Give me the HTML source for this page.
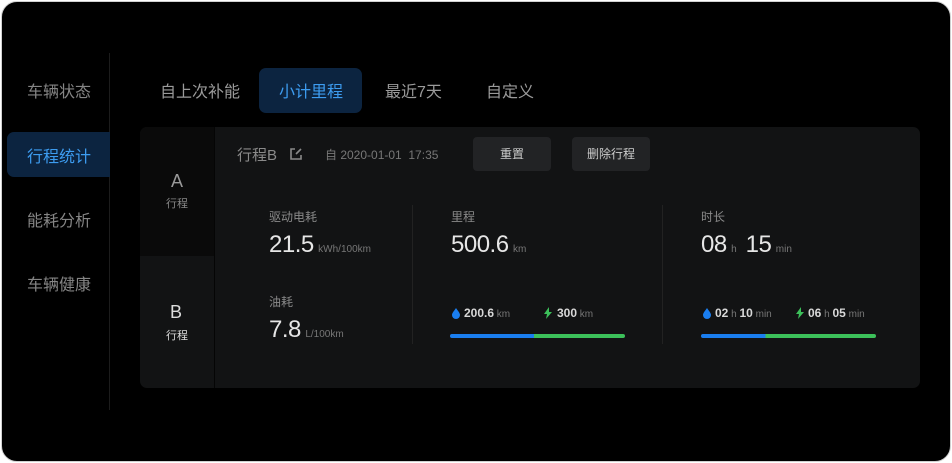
<html><head><style>
*{margin:0;padding:0;box-sizing:border-box}
body{width:952px;height:463px;background:#fff;font-family:"Liberation Sans","Noto Sans CJK SC",sans-serif;position:relative;overflow:hidden}
.card{position:absolute;left:1px;top:1px;width:950px;height:461px;background:#000;border:1px solid #d0d0d0;border-radius:16px}
.a{position:absolute;white-space:nowrap}
.nav{font-size:16px;color:#858585}
.tab{font-size:16px;color:#9a9a9a}
.g{color:#8a8a8a}
.big{font-size:24px;color:#e6e6e6;letter-spacing:-0.5px}
.u{font-size:10px;color:#777}
.s{font-size:12px;color:#d8d8d8;font-weight:bold}
</style></head><body>
<div class="card"></div>
<div class="a" style="left:109px;top:53px;width:1px;height:357px;background:#1c1c1c"></div>
<div class="a" style="left:7px;top:132px;width:103px;height:45px;background:#0c2440;border-radius:7px 0 0 7px"></div>
<div class="a nav" style="left:27px;top:78px">车辆状态</div>
<div class="a nav" style="left:27px;top:143px;color:#3d9cf0">行程统计</div>
<div class="a nav" style="left:27px;top:207px">能耗分析</div>
<div class="a nav" style="left:27px;top:271px">车辆健康</div>

<div class="a" style="left:259px;top:68px;width:103px;height:45px;background:#0c2440;border-radius:7px"></div>
<div class="a tab" style="left:160px;top:78px">自上次补能</div>
<div class="a tab" style="left:279px;top:78px;color:#3d9cf0">小计里程</div>
<div class="a tab" style="left:385px;top:78px">最近7天</div>
<div class="a tab" style="left:486px;top:78px">自定义</div>

<div class="a" style="left:140px;top:127px;width:780px;height:261px;background:#121314;border-radius:7px;overflow:hidden">
 <div class="a" style="left:0;top:0;width:74px;height:129px;background:#0a0a0a"></div>
 <div class="a" style="left:74px;top:0;width:1px;height:261px;background:#050505"></div>
</div>
<div class="a" style="left:171px;top:171px;font-size:18px;color:#999">A</div>
<div class="a" style="left:166px;top:195px;font-size:11px;color:#888">行程</div>
<div class="a" style="left:170px;top:302px;font-size:18px;color:#ddd">B</div>
<div class="a" style="left:166px;top:327px;font-size:11px;color:#ddd">行程</div>

<div class="a" style="left:237px;top:144px;font-size:15px;color:#8a8a8a">行程B</div>
<svg class="a" style="left:289px;top:147px" width="14" height="14" viewBox="0 0 14 14"><path d="M6 2H2v10h10V8M7 7l5-5" stroke="#8a8a8a" stroke-width="1.6" fill="none"/></svg>
<div class="a" style="left:325px;top:146px;font-size:12px;color:#777">自 2020-01-01 &nbsp;17:35</div>
<div class="a" style="left:473px;top:137px;width:78px;height:34px;background:#222325;border-radius:4px;font-size:12px;color:#ccc;text-align:center;line-height:34px">重置</div>
<div class="a" style="left:572px;top:137px;width:78px;height:34px;background:#222325;border-radius:4px;font-size:12px;color:#ccc;text-align:center;line-height:34px">删除行程</div>

<div class="a" style="left:412px;top:205px;width:1px;height:139px;background:#222"></div>
<div class="a" style="left:662px;top:205px;width:1px;height:139px;background:#222"></div>

<div class="a g" style="left:269px;top:208px;font-size:12px">驱动电耗</div>
<div class="a" style="left:269px;top:231px"><span class="big">21.5</span> <span class="u">kWh/100km</span></div>
<div class="a g" style="left:269px;top:293px;font-size:12px">油耗</div>
<div class="a" style="left:269px;top:316px"><span class="big">7.8</span> <span class="u">L/100km</span></div>

<div class="a g" style="left:451px;top:208px;font-size:12px">里程</div>
<div class="a" style="left:451px;top:231px"><span class="big">500.6</span> <span class="u">km</span></div>
<div class="a g" style="left:701px;top:208px;font-size:12px">时长</div>
<div class="a" style="left:701px;top:231px"><span class="big">08</span> <span class="u">h</span> &nbsp;<span class="big">15</span> <span class="u">min</span></div>

<svg class="a" style="left:452px;top:308px" width="8" height="11" viewBox="0 0 8 11"><path d="M4 0C2 3 0 5 0 7a4 4 0 0 0 8 0C8 5 6 3 4 0z" fill="#1a7ef0"/></svg>
<div class="a" style="left:464px;top:306px"><span class="s">200.6</span><span class="u"> km</span></div>
<svg class="a" style="left:544px;top:307px" width="8" height="12" viewBox="0 0 8 12"><path d="M5 0L0 7h3l-1 5 6-7H5z" fill="#3cc05a"/></svg>
<div class="a" style="left:557px;top:306px"><span class="s">300</span><span class="u"> km</span></div>
<div class="a" style="left:450px;top:334px;width:175px;height:4px;border-radius:2px;background:linear-gradient(90deg,#1a7ef0 48%,#3cc05a 48%)"></div>

<svg class="a" style="left:703px;top:308px" width="8" height="11" viewBox="0 0 8 11"><path d="M4 0C2 3 0 5 0 7a4 4 0 0 0 8 0C8 5 6 3 4 0z" fill="#1a7ef0"/></svg>
<div class="a" style="left:715px;top:306px"><span class="s">02</span><span class="u"> h </span><span class="s">10</span><span class="u"> min</span></div>
<svg class="a" style="left:796px;top:307px" width="8" height="12" viewBox="0 0 8 12"><path d="M5 0L0 7h3l-1 5 6-7H5z" fill="#3cc05a"/></svg>
<div class="a" style="left:808px;top:306px"><span class="s">06</span><span class="u"> h </span><span class="s">05</span><span class="u"> min</span></div>
<div class="a" style="left:701px;top:334px;width:175px;height:4px;border-radius:2px;background:linear-gradient(90deg,#1a7ef0 37%,#3cc05a 37%)"></div>
</body></html>
